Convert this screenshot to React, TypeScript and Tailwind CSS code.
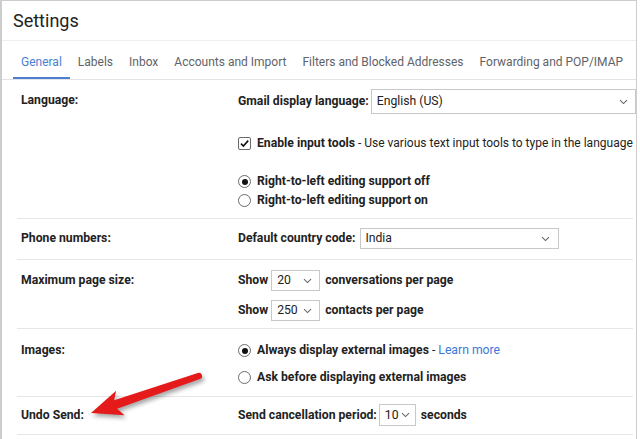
import React from "react";

const F = { fontFamily: "Roboto, 'Liberation Sans', sans-serif" };

function Chevron() {
  return (
    <svg width="9" height="6" viewBox="0 0 9 6" className="shrink-0">
      <path d="M1 1.2 L4.5 4.6 L8 1.2" fill="none" stroke="#666" strokeWidth="1.1" />
    </svg>
  );
}

function Select({ value, w, h = 21, pl = 5, pr = 7 }: { value: string; w: string; h?: number; pl?: number; pr?: number }) {
  return (
    <div
      className={`${w} flex items-center justify-between border border-[#c8c8c8] bg-white font-normal text-[#222]`}
      style={{ height: h, paddingLeft: pl, paddingRight: pr }}
    >
      <span>{value}</span>
      <Chevron />
    </div>
  );
}

function Checkbox() {
  return (
    <div className="w-[13px] h-[13px] border border-[#6b6b6b] rounded-[2px] flex items-center justify-center shrink-0">
      <svg width="11" height="11" viewBox="0 0 11 11">
        <path d="M2 5.6 L4.4 8 L9.2 2.6" fill="none" stroke="#111" strokeWidth="1.6" />
      </svg>
    </div>
  );
}

function Radio({ on }: { on?: boolean }) {
  return (
    <div className="w-[13px] h-[13px] rounded-full border border-[#6b6b6b] flex items-center justify-center shrink-0">
      {on && <div className="w-[6px] h-[6px] rounded-full bg-[#111]" />}
    </div>
  );
}

function Row({ label, lh, children, cls }: { label: string; lh: number; children: React.ReactNode; cls: string }) {
  return (
    <div className={`flex border-b border-[#e6e6e6] ${cls}`}>
      <div className="w-[221px] pl-1 flex items-center shrink-0" style={{ height: lh }}>
        {label}
      </div>
      <div className="flex flex-col flex-1">{children}</div>
    </div>
  );
}

export default function App() {
  const tabs = ["General", "Labels", "Inbox", "Accounts and Import", "Filters and Blocked Addresses", "Forwarding and POP/IMAP"];
  return (
    <div className="relative w-[640px] h-[439px] bg-white overflow-hidden" style={F}>
      <div className="w-[637px] h-[439px] border-l-2 border-t border-r border-[#cdcdcd] flex flex-col">
        <div className="h-[40px] flex items-center pl-[11px] border-b border-[#efefef]">
          <span className="text-[18px] text-[#222] leading-none pt-[1px]">Settings</span>
        </div>
        <div className="h-[39px] flex pl-[11px] border-b border-[#e3e3e3]">
          {tabs.map((t, i) => (
            <div
              key={t}
              className={`px-2 flex items-center text-[12px] h-full ${
                i === 0 ? "text-[#4a7fd3] border-b-2 border-[#4a7fd3]" : "text-[#5f6368] border-b-2 border-transparent"
              }`}
            >
              <span className="pt-[6px]">{t}</span>
            </div>
          ))}
        </div>
        <div className="pl-[15px] pr-[3px] text-[12.2px] font-bold text-[#222] leading-[19px]">
          <Row label="Language:" lh={23} cls="pt-[9px] pb-[8px]">
            <div className="flex items-center h-[25px] mr-[-3px]">
              <span>Gmail display language:</span>
              <div className="ml-[2px] flex-1">
                <Select value="English (US)" w="w-full" h={25} />
              </div>
            </div>
            <div className="flex items-center mt-[20px] h-[19px] gap-[6px] whitespace-nowrap">
              <Checkbox />
              <span>
                Enable input tools
                <span className="font-normal text-[12px]"> - Use various text input tools to type in the language</span>
              </span>
            </div>
            <div className="flex items-center mt-[19px] h-[19px] gap-[6px]">
              <Radio on />
              <span>Right-to-left editing support off</span>
            </div>
            <div className="flex items-center h-[19px] gap-[6px]">
              <Radio />
              <span>Right-to-left editing support on</span>
            </div>
          </Row>
          <Row label="Phone numbers:" lh={21} cls="pt-[9px] pb-[10px]">
            <div className="flex items-center h-[21px]">
              <span>Default country code:</span>
              <div className="ml-[5px]">
                <Select value="India" w="w-[199px]" h={21} pl={4} pr={8} />
              </div>
            </div>
          </Row>
          <Row label="Maximum page size:" lh={21} cls="pt-[10px] pb-[7px]">
            <div className="flex items-center h-[21px]">
              <span>Show</span>
              <div className="ml-[3px] mr-[5px]">
                <Select value="20" w="w-[49px]" h={21} />
              </div>
              <span>conversations per page</span>
            </div>
            <div className="flex items-center h-[21px] mt-[9px]">
              <span>Show</span>
              <div className="ml-[3px] mr-[5px]">
                <Select value="250" w="w-[49px]" h={21} />
              </div>
              <span>contacts per page</span>
            </div>
          </Row>
          <Row label="Images:" lh={19} cls="pt-[12px] pb-[9px]">
            <div className="flex items-center h-[19px] gap-[6px]">
              <Radio on />
              <span>
                Always display external images<span className="font-normal"> - </span>
                <span className="font-normal text-[#3c78d8]">Learn more</span>
              </span>
            </div>
            <div className="flex items-center h-[19px] mt-[8px] gap-[6px]">
              <Radio />
              <span>Ask before displaying external images</span>
            </div>
          </Row>
          <Row label="Undo Send:" lh={22} cls="pt-[7px] pb-[8px]">
            <div className="flex items-center h-[22px]">
              <span>Send cancellation period:</span>
              <div className="ml-[2px] mr-[5px]">
                <Select value="10" w="w-[37px]" h={22} pr={5} />
              </div>
              <span>seconds</span>
            </div>
          </Row>
        </div>
      </div>
      <svg
        className="absolute left-0 top-0 pointer-events-none drop-shadow-[2px_3px_2px_rgba(0,0,0,0.35)]"
        width="640"
        height="439"
      >
        <g transform="translate(91,413) rotate(-18.9)">
          <path
            d="M0 0 L31 -13 L26 -4.5 L114 -3.2 A3.2 3.2 0 0 1 114 3.2 L26 4.5 L31 13 Z"
            fill="#e51b1b"
          />
        </g>
      </svg>
    </div>
  );
}
